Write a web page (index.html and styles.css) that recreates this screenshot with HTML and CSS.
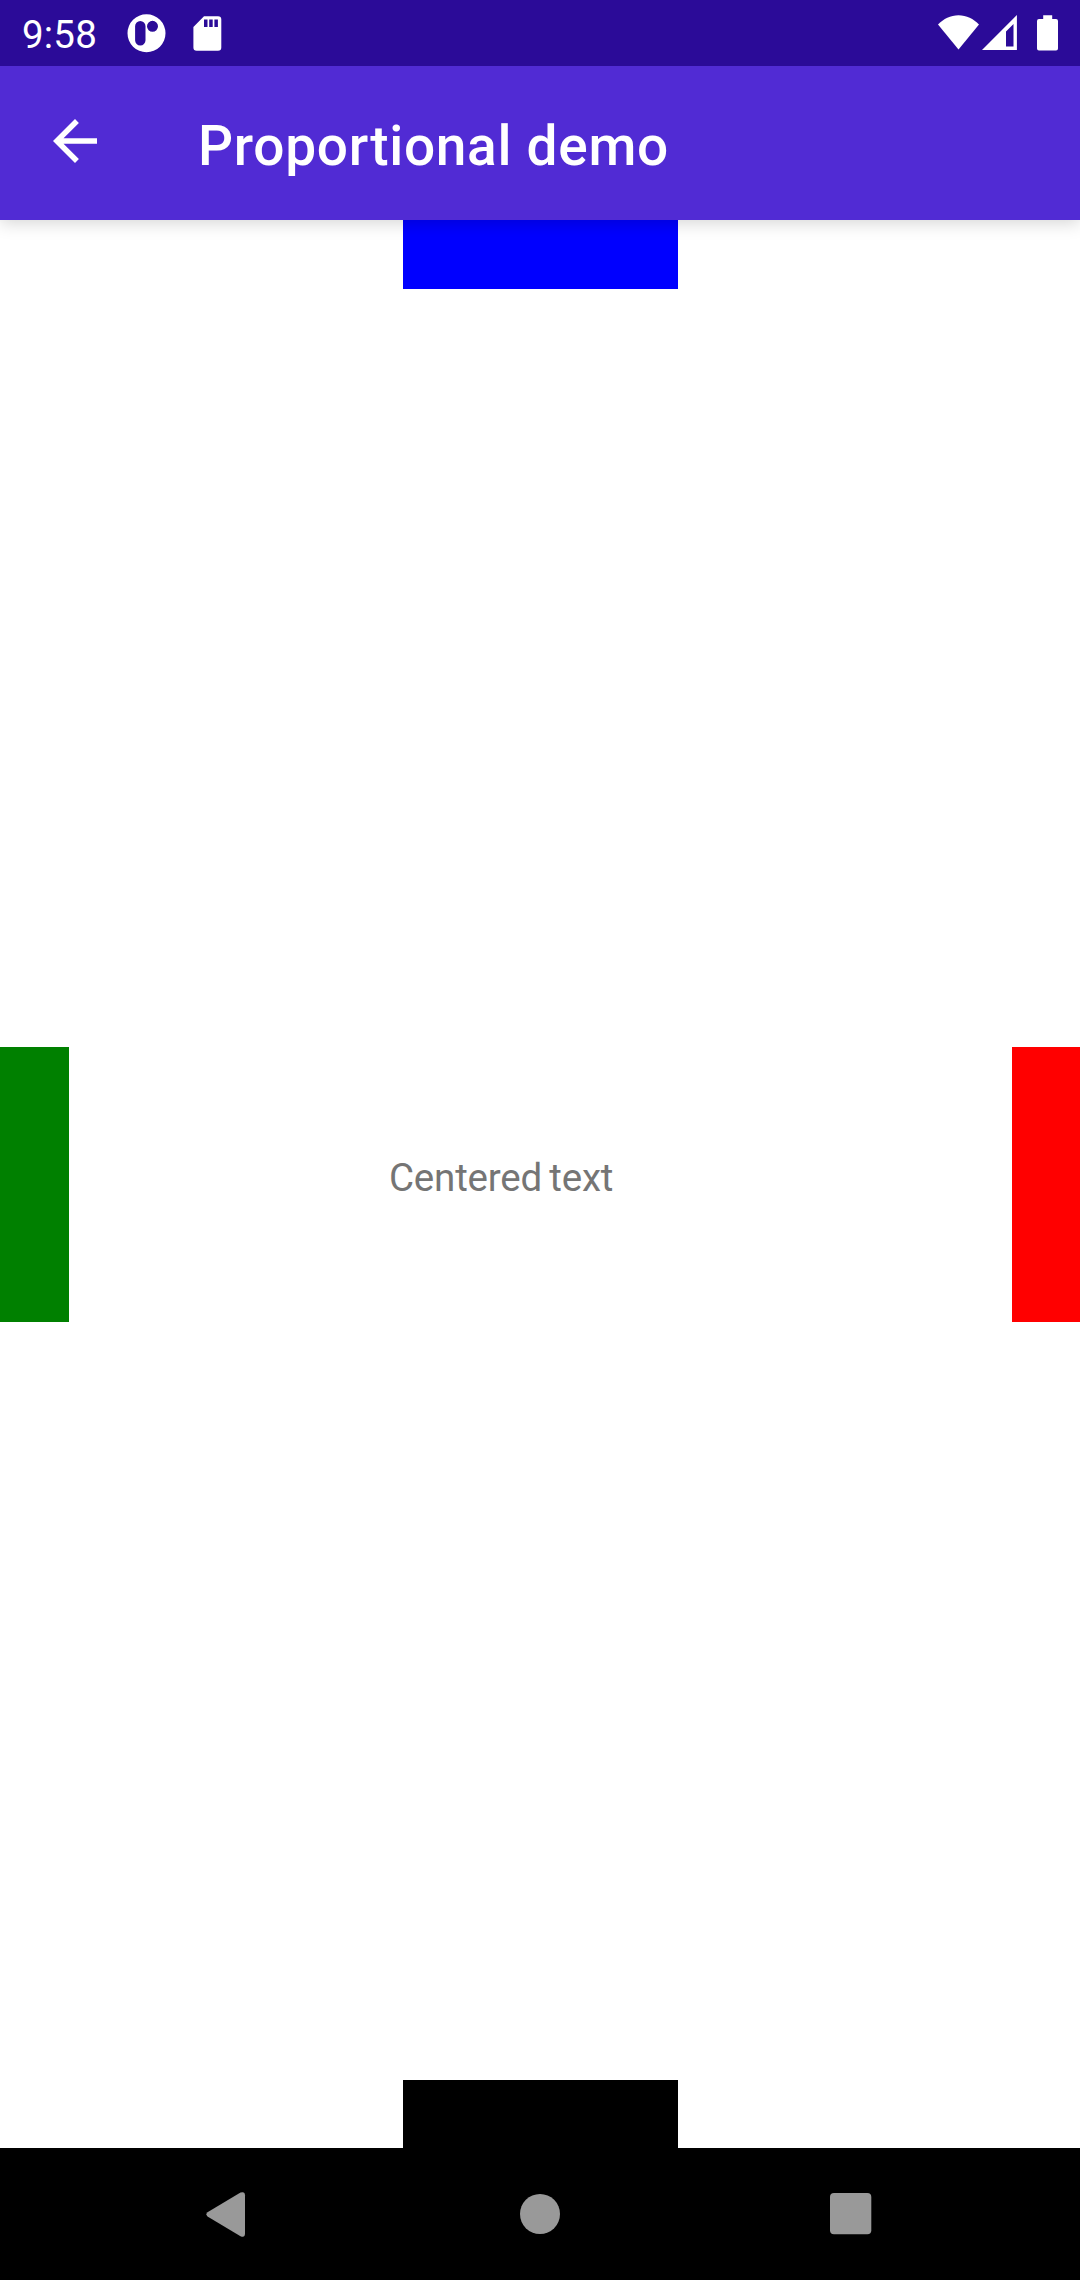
FILE: index.html
```html
<!DOCTYPE html>
<html lang="en">
<head>
<meta charset="utf-8">
<title>Proportional demo</title>
<link rel="stylesheet" href="styles.css">
</head>
<body>
<div class="screen">
  <div class="status-bar">
    <span class="clock">9:58</span>
    <svg class="notices" width="96" height="66" viewBox="127 0 96 66">
      <path fill="#fff" fill-rule="evenodd" d="M146.5 14.2a19 19 0 1 1 0 38a19 19 0 1 1 0-38zM140.3 21a5.2 5.2 0 0 0-5.2 5.2v14a5.2 5.2 0 0 0 10.4 0v-14a5.2 5.2 0 0 0-5.2-5.2zM152.5 20.8a5.5 5.5 0 1 0 0 11a5.5 5.5 0 1 0 0-11z"/>
      <path fill="#fff" fill-rule="evenodd" d="M204 16.3h14a3.3 3.3 0 0 1 3.3 3.3v27.8a3.3 3.3 0 0 1-3.3 3.3h-21.300a3.300 3.300 0 0 1-3.300-3.300v-20.400zM204 19.500v7.500h3.500v-7.500zM209.200 19.500v7.500h3.500v-7.500zM214.400 19.500v7.500h3.500v-7.500z"/>
    </svg>
    <svg class="signals" width="122" height="66" viewBox="937 0 122 66">
      <path fill="#fff" d="M958.500 49.500L938 24.500C943.500 18.700 950.500 15.200 958.500 15.200S973.500 18.700 979 24.500z"/>
      <path fill="#fff" fill-rule="evenodd" d="M1016.900 15v34.900h-34.900zM1013.500 24l-7.500 7.500v15h7.500z"/>
      <path fill="#fff" d="M1043.200 15.200h9v3.800h3.800a2 2 0 0 1 2 2v27.500a2 2 0 0 1-2 2h-17a2 2 0 0 1-2-2v-27.500a2 2 0 0 1 2-2h4.200z"/>
    </svg>
  </div>
  <header class="app-bar">
    <svg class="back" width="44" height="44" viewBox="4 4 16 16"><path fill="#fff" d="M20 11H7.830l5.590-5.590L12 4l-8 8 8 8 1.410-1.410L7.830 13H20v-2z"/></svg>
    <h1 class="title">Proportional demo</h1>
  </header>
  <main class="layout">
    <div class="box top"></div>
    <div class="box left"></div>
    <p class="label">Centered text</p>
    <div class="box right"></div>
    <div class="box bottom"></div>
  </main>
  <nav class="nav-bar">
    <svg width="44" height="46" viewBox="206 2191 44 46"><path fill="#999" d="M207.500 2212.200L240.500 2192.600Q244.900 2191 245 2195.200V2233.800Q244.900 2238 240.500 2236.200L207.500 2216.400Q205.300 2214.300 207.500 2212.200z"/></svg>
    <svg width="40" height="40" viewBox="0 0 40 40"><circle cx="20" cy="20" r="20" fill="#999"/></svg>
    <svg width="42" height="42" viewBox="0 0 42 42"><rect width="41.300" height="41.300" rx="4" fill="#999"/></svg>
  </nav>
</div>
</body>
</html>
```

FILE: styles.css
```css
body {
  margin: 0;
  background: #fff;
  font-family: Roboto, sans-serif;
}

.screen {
  display: flex;
  flex-direction: column;
  width: 1080px;
  height: 2280px;
}

.status-bar {
  z-index: 2;
  display: flex;
  height: 66px;
  background: #2b0b98;
  color: #fff;
}

.clock {
  width: 105px;
  padding-left: 22px;
  font-size: 38.5px;
  line-height: 70px;
  letter-spacing: 0.2px;
}

.signals {
  margin-left: auto;
  margin-right: 21px;
}

.app-bar {
  z-index: 1;
  display: flex;
  align-items: flex-start;
  height: 154px;
  background: #512bd4;
  color: #fff;
  box-shadow: 0 3px 16px rgba(0, 0, 0, 0.17);
}

.back {
  margin: 53px 0 0 53px;
}

.title {
  margin: 48px 0 0 101px;
  font-size: 55px;
  font-weight: 500;
  line-height: 64px;
  letter-spacing: 0.7px;
}

.layout {
  display: grid;
  grid-template-columns: 69px 334px 275px 334px 68px;
  grid-template-rows: 69px 758px 275px 758px 68px;
}

.top {
  grid-area: 1 / 3;
  background: #00f;
}

.left {
  grid-area: 3 / 1;
  background: #008000;
}

.label {
  grid-area: 3 / 2 / 4 / 5;
  margin: 108px 0 0 320px;
  color: #757575;
  font-size: 38.5px;
  line-height: 46px;
  letter-spacing: -0.2px;
  word-spacing: -2px;
}

.right {
  grid-area: 3 / 5;
  background: #f00;
}

.bottom {
  grid-area: 5 / 3;
  background: #000;
}

.nav-bar {
  display: flex;
  align-items: center;
  justify-content: space-between;
  box-sizing: border-box;
  height: 132px;
  padding: 0 208px 0 206px;
  background: #000;
}
```
